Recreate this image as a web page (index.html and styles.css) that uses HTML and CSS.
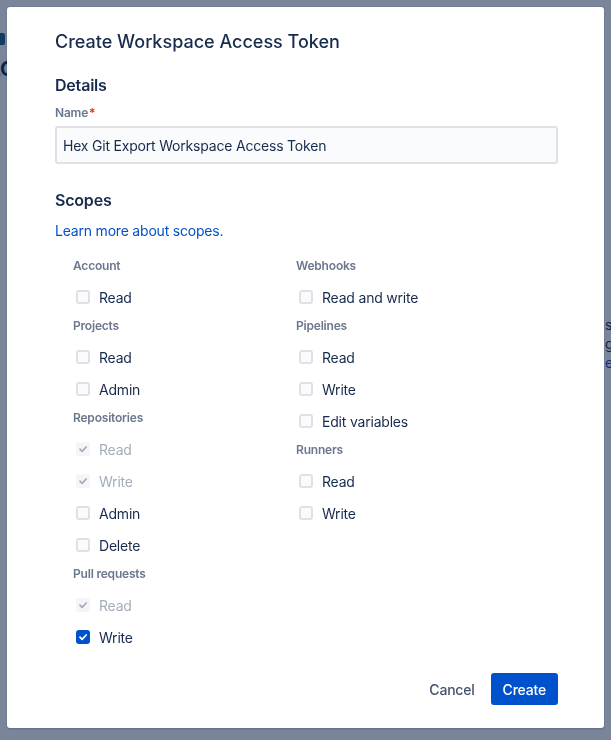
FILE: index.html
```html
<!DOCTYPE html>
<html lang="en">
<head>
<meta charset="UTF-8" />
<meta name="viewport" content="width=device-width, initial-scale=1.0"/>
<title>Workspace Access Tokens</title>
<link rel="stylesheet" href="styles.css">
</head>
<body>

<!-- page behind the dialog -->
<div class="page">
  <div class="page-side">
    <span class="side-icon"></span>
    <span class="side-title">AC</span>
  </div>
  <div class="page-main">
    <p>s</p>
    <p>g</p>
    <p class="page-link">e</p>
  </div>
</div>

<div class="blanket"></div>

<div class="modal" role="dialog">
  <h1 class="modal-title">Create Workspace Access Token</h1>

  <h2 class="section-title">Details</h2>
  <label class="field-label" for="token-name">Name<span class="required">*</span></label>
  <input class="text-field" type="text" id="token-name" value="Hex Git Export Workspace Access Token" />

  <h2 class="section-title scopes-title">Scopes</h2>
  <a class="link" href="#">Learn more about scopes.</a>

  <div class="scope-grid">
    <div class="scope-col">
      <div class="group-label">Account</div>
      <label class="check"><span class="box"></span>Read</label>

      <div class="group-label">Projects</div>
      <label class="check"><span class="box"></span>Read</label>
      <label class="check"><span class="box"></span>Admin</label>

      <div class="group-label">Repositories</div>
      <label class="check disabled"><span class="box checked"><svg viewBox="0 0 14 14"><path d="M4 7.2l2.1 2.1L10.2 5"/></svg></span>Read</label>
      <label class="check disabled"><span class="box checked"><svg viewBox="0 0 14 14"><path d="M4 7.2l2.1 2.1L10.2 5"/></svg></span>Write</label>
      <label class="check"><span class="box"></span>Admin</label>
      <label class="check"><span class="box"></span>Delete</label>

      <div class="group-label">Pull requests</div>
      <label class="check disabled"><span class="box checked"><svg viewBox="0 0 14 14"><path d="M4 7.2l2.1 2.1L10.2 5"/></svg></span>Read</label>
      <label class="check"><span class="box checked on"><svg viewBox="0 0 14 14"><path d="M4 7.2l2.1 2.1L10.2 5"/></svg></span>Write</label>
    </div>

    <div class="scope-col">
      <div class="group-label">Webhooks</div>
      <label class="check"><span class="box"></span>Read and write</label>

      <div class="group-label">Pipelines</div>
      <label class="check"><span class="box"></span>Read</label>
      <label class="check"><span class="box"></span>Write</label>
      <label class="check"><span class="box"></span>Edit variables</label>

      <div class="group-label">Runners</div>
      <label class="check"><span class="box"></span>Read</label>
      <label class="check"><span class="box"></span>Write</label>
    </div>
  </div>

  <div class="modal-footer">
    <button class="btn btn-subtle">Cancel</button>
    <button class="btn btn-primary">Create</button>
  </div>
</div>

</body>
</html>
```

FILE: styles.css
```css
* { margin: 0; padding: 0; box-sizing: border-box; }
body {
  font-family: Inter, "Noto Sans", Arial, sans-serif;
  letter-spacing: -0.2px;
  background: #fff;
  color: #172b4d;
  width: 611px;
  height: 740px;
  overflow: hidden;
}

/* page behind */
.page {
  display: flex;
  justify-content: space-between;
  height: 740px;
  overflow: hidden;
}
.page-side { padding-top: 33px; margin-left: -14px; }
.side-icon {
  display: block;
  width: 19px; height: 12px;
  background: #1d5f8a;
  border-radius: 2px;
}
.side-title {
  display: block;
  margin-top: 12px;
  font-size: 20px;
  font-weight: 700;
  color: #172b4d;
}
.page-main {
  padding-top: 315px;
  width: 6px;
  font-size: 14px;
  line-height: 19px;
  color: #172b4d;
}
.page-link { color: #0052cc; }

.blanket {
  position: fixed;
  inset: 0;
  background: rgba(9, 30, 66, 0.54);
}

/* dialog */
.modal {
  position: absolute;
  left: 7px;
  top: 7px;
  width: 597px;
  height: 721px;
  background: #fff;
  border-radius: 3px;
  box-shadow: 0 0 0 1px rgba(9, 30, 66, 0.08), 0 2px 1px rgba(9, 30, 66, 0.08);
  padding: 23px 46px 0 48px;
  display: flex;
  flex-direction: column;
}
.modal-title {
  font-size: 18px;
  line-height: 24px;
  font-weight: 500;
  letter-spacing: 0;
  color: #172b4d;
}
.section-title {
  margin-top: 21px;
  font-size: 16px;
  line-height: 20px;
  font-weight: 600;
  color: #172b4d;
}
.scopes-title { margin-top: 26px; }
.field-label {
  display: block;
  margin-top: 10px;
  font-size: 12px;
  line-height: 16px;
  font-weight: 600;
  color: #6b778c;
}
.required { color: #de350b; margin-left: 1px; }
.text-field {
  margin-top: 5px;
  width: 100%;
  height: 38px;
  padding: 0 6px;
  border: 2px solid #dfe1e6;
  border-radius: 3px;
  background: #fafbfc;
  font-family: inherit;
  font-size: 14px;
  letter-spacing: -0.2px;
  color: #172b4d;
}
.link {
  display: block;
  margin-top: 11px;
  font-size: 14px;
  line-height: 20px;
  color: #0052cc;
  text-decoration: none;
}

/* scope checkboxes */
.scope-grid {
  margin-top: 12px;
  padding-left: 18px;
  display: grid;
  grid-template-columns: 223px 1fr;
}
.group-label {
  height: 28px;
  line-height: 26px;
  font-size: 12px;
  font-weight: 600;
  color: #6b778c;
}
.check {
  display: flex;
  align-items: center;
  height: 32px;
  font-size: 14px;
  color: #172b4d;
}
.check.disabled { color: #a5adba; }
.box {
  width: 14px;
  height: 14px;
  margin: 0 9px 0 3px;
  border: 2px solid #dfe1e6;
  border-radius: 3px;
  background: #fafbfc;
  display: flex;
  align-items: center;
  justify-content: center;
}
.box svg { width: 14px; height: 14px; flex: none; }
.box path {
  fill: none;
  stroke: #a5adba;
  stroke-width: 1.8;
  stroke-linecap: round;
  stroke-linejoin: round;
}
.box.checked { background: #f4f5f7; border-color: #f4f5f7; }
.box.on { background: #0052cc; border-color: #0052cc; }
.box.on path { stroke: #fff; }

/* footer */
.modal-footer {
  margin-top: 20px;
  display: flex;
  justify-content: flex-end;
  gap: 4px;
}
.btn {
  height: 32px;
  padding: 0 12px;
  border: none;
  border-radius: 3px;
  font-family: inherit;
  font-size: 14px;
  font-weight: 500;
  letter-spacing: -0.2px;
  cursor: pointer;
}
.btn-subtle { background: none; color: #42526e; }
.btn-primary { background: #0052cc; color: #fff; }
```
